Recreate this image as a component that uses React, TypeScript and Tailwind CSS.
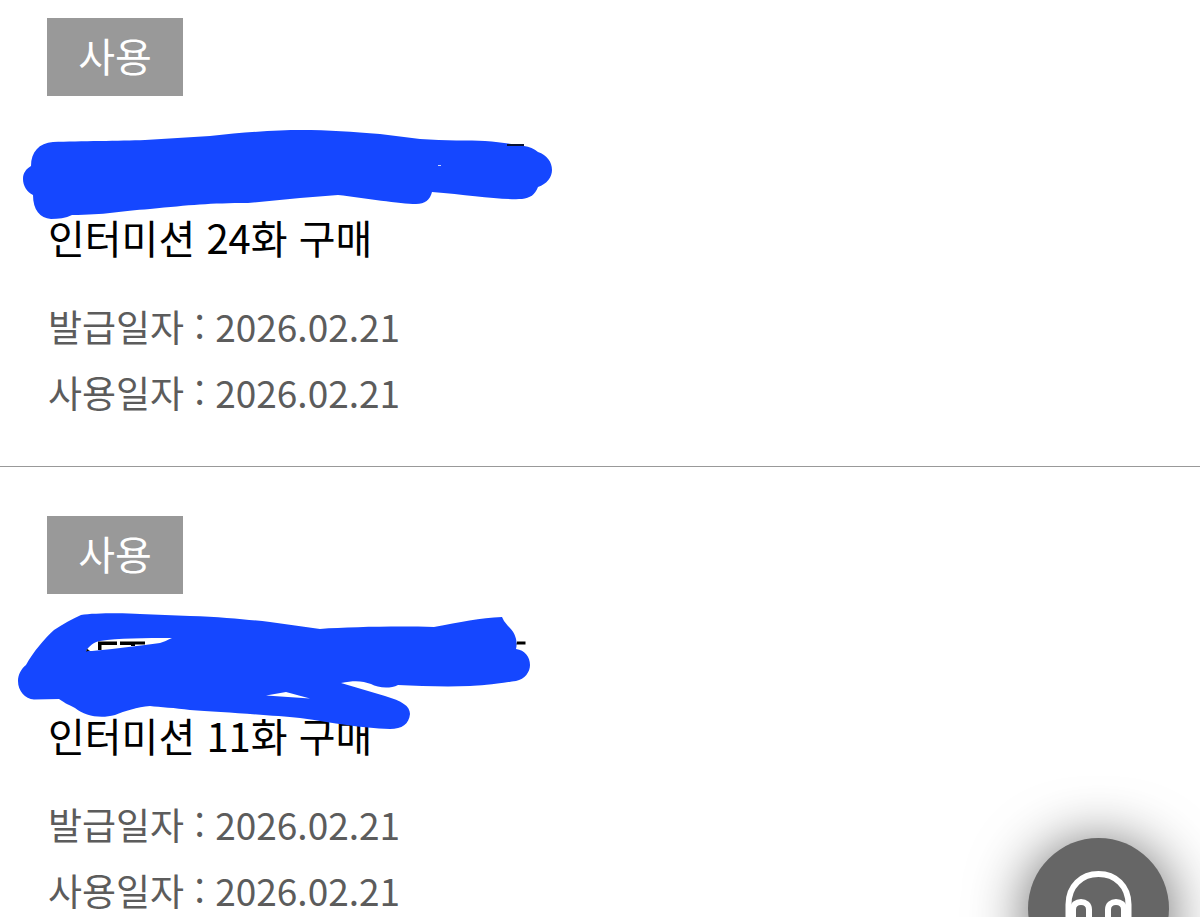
import type { ReactNode } from "react";

type Coupon = {
  status: string;
  title: string;
  issued: string;
  used: string;
  cover: ReactNode;
};

const firstCover = (
  <svg
    className="pointer-events-none absolute -left-12 top-0"
    width="600"
    height="140"
    viewBox="0 96 600 140"
    aria-hidden="true"
  >
    <path
      fill="#1547ff"
      d="M31 166C31 152 39 143 53 142C80 141 120 141 145 140L210 136C245 132 280 130 300 130C330 130 352 132 380 134L420 139C445 141 470 140 485 141C500 142 512 144 524 146Q532 147 538 152C547 155 552 162 552 170C552 177 547 184 538 187C535 195 530 198 522 199C500 200 470 195 432 192C430 200 425 204 416 204C400 204 365 198 338 195L300 198L248 203C210 203 190 205 150 209C120 211 105 215 72 215C66 218 58 219 51 219C40 218 33 210 33 195C27 192 23 186 23 179C23 173 26 169 31 166Z"
    />
    <rect x="507" y="144" width="17" height="2" fill="#0b1533" />
    <rect x="438" y="165" width="3" height="1" fill="#cbd6ff" />
  </svg>
);

const secondCover = (
  <svg
    className="pointer-events-none absolute -left-12 top-0"
    width="600"
    height="140"
    viewBox="0 594 600 140"
    aria-hidden="true"
  >
    <path
      fill="#1547ff"
      fillRule="evenodd"
      d="M26 665C33 652 45 638 54 630C63 624 72 619 81 615C94 613 125 613 140 614L190 616C225 617 250 620 270 622L320 629C350 627 395 626 434 627C460 622 480 618 502 617L504 621L508 626C515 632 518 641 516 649C525 650 530 657 530 665C530 672 525 679 516 681C495 684 480 686 470 686C445 687 420 686 398 685C390 689 378 688 371 684C363 681 355 680 341 683L385 696C402 701 410 706 410 714C409 724 402 729 390 729C360 728 335 723 300 718C270 715 220 712 190 710C175 708 160 707 150 706C137 707 125 711 115 715C100 719 85 716 75 708C67 704 63 702 59 699L34 699.500C25 699 18 691 18 681C18 675 21 669 26 665ZM266 695.500L286 692L310 698.500Z"
    />
    <path
      fill="#ffffff"
      d="M86 651C89 646 94 642 100 641C118 638 145 638 172 638C167 640 164 642 160 643L145 645L112 649L92 651Z"
    />
    <path fill="#000000" d="M98 641.500H117V645H101.500V650H98ZM120 641.500H145V644.500H135V646H131V645H120ZM86 651.500L87 649L90 650.500Z" />
    <path fill="#000000" d="M517 641.500H525.500V644.500H516.500Z" />
  </svg>
);

const coupons: Coupon[] = [
  {
    status: "사용",
    title: "인터미션 24화 구매",
    issued: "2026.02.21",
    used: "2026.02.21",
    cover: firstCover,
  },
  {
    status: "사용",
    title: "인터미션 11화 구매",
    issued: "2026.02.21",
    used: "2026.02.21",
    cover: secondCover,
  },
];

function CouponItem({ coupon }: { coupon: Coupon }) {
  return (
    <li className="border-b border-[#999999] px-[47px] pb-[41px] pt-[49px] first:pt-[18px] last:border-b-0 last:pb-0">
      <span className="flex h-[78px] w-[136px] items-center justify-center bg-[#999999] pb-1 text-[40px] leading-[60px] text-white">
        {coupon.status}
      </span>
      <div className="pl-px">
        <div className="relative pt-[111px]">
          <h2 className="text-[40px] leading-[60px] text-black">{coupon.title}</h2>
          {coupon.cover}
        </div>
        <div className="pt-[26px] text-[37px] leading-[66px] text-[#5c5c5c]">
          <p>발급일자 : {coupon.issued}</p>
          <p>사용일자 : {coupon.used}</p>
        </div>
      </div>
    </li>
  );
}

function SupportButton() {
  return (
    <button
      type="button"
      aria-label="고객센터"
      className="fixed -bottom-[62px] right-[31px] flex size-[141px] items-center justify-center rounded-full bg-[#666666] shadow-[0_6px_60px_rgba(0,0,0,0.65)]"
    >
      <svg width="77" height="77" viewBox="0 0 77 77" fill="none" stroke="#ffffff" strokeWidth="6">
        <path d="M8.500 52V34.500C8.500 16 21.500 4 38.500 4S68.500 16 68.500 34.500V52" />
        <path d="M13 39.500C13 34.500 16.500 32 21 32S29 35 29 39.500V57C29 62 25.500 65 21 65S13 62 13 57Z" />
        <path d="M64 39.500C64 34.500 60.500 32 56 32S48 35 48 39.500V57C48 62 51.500 65 56 65S64 62 64 57Z" />
      </svg>
    </button>
  );
}

export default function App() {
  return (
    <main lang="ko" className="bg-white font-['Noto_Sans_CJK_KR',sans-serif]">
      <ul>
        {coupons.map((coupon) => (
          <CouponItem key={coupon.title} coupon={coupon} />
        ))}
      </ul>
      <SupportButton />
    </main>
  );
}
